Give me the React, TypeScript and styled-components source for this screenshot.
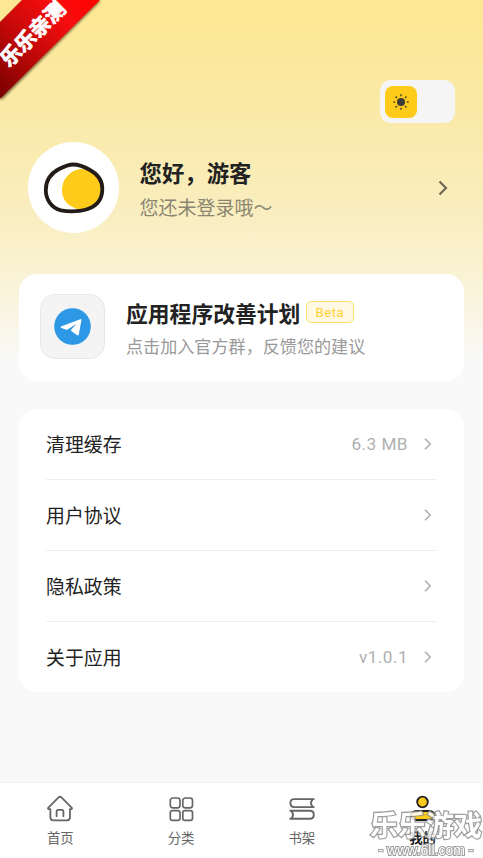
import React from 'react';
import styled, { createGlobalStyle } from 'styled-components';

const GlobalStyle = createGlobalStyle`
  * { box-sizing: border-box; }
  body { margin: 0; background: #f9f9f9; }
  h1, h2, p { margin: 0; }
`;

const Screen = styled.div`
  position: relative;
  display: flex;
  flex-direction: column;
  width: 483px;
  height: 858px;
  overflow: hidden;
  font-family: Roboto, 'Noto Sans CJK SC', sans-serif;
  color: #222;
  background: linear-gradient(180deg, #fde792 0, #faeaa9 120px, #f9edbc 200px, #faf2d2 270px, #f9f9f9 365px);
`;

const Ribbon = styled.div`
  position: absolute;
  left: 0;
  top: 0;
  width: 102px;
  height: 102px;
  overflow: hidden;
`;

const RibbonShape = styled.svg`
  display: block;
`;

const RibbonText = styled.span`
  position: absolute;
  left: -9px;
  top: 22px;
  width: 84px;
  line-height: 24px;
  text-align: center;
  white-space: nowrap;
  font-size: 20.5px;
  font-weight: 700;
  color: #fff;
  transform: rotate(-45deg);
  -webkit-text-stroke: 0.8px #fff;
`;

const TopBar = styled.header`
  display: flex;
  justify-content: flex-end;
  padding: 80px 28px 0 0;
`;

const ThemeSwitch = styled.button`
  display: flex;
  align-items: center;
  width: 75px;
  height: 43px;
  padding: 0 5px;
  border: 0;
  border-radius: 11px;
  background: #f5f5f5;
`;

const Knob = styled.span`
  display: grid;
  place-items: center;
  width: 32px;
  height: 32px;
  border-radius: 8px;
  background: #ffcb1a;
`;

const Profile = styled.section`
  display: flex;
  align-items: center;
  height: 92px;
  margin-top: 18.5px;
  padding: 0 33px 0 28px;
`;

const Avatar = styled.div`
  width: 91px;
  height: 91px;
  border-radius: 50%;
  background: #fff;
  svg { display: block; }
`;

const Greeting = styled.div`
  flex: 1;
  padding: 7px 0 0 20.5px;
`;

const Hello = styled.h1`
  font-size: 22.4px;
  line-height: 34px;
  font-weight: 700;
`;

const LoginHint = styled.p`
  margin-top: 1px;
  font-size: 19px;
  line-height: 34px;
  color: #8a8571;
`;

const Card = styled.section`
  margin: 0 19px;
  border-radius: 18px;
  background: #fff;
`;

const PlanCard = styled(Card)`
  display: flex;
  align-items: center;
  height: 107.5px;
  margin-top: 40px;
  padding-left: 21px;
`;

const AppTile = styled.div`
  display: grid;
  place-items: center;
  width: 65px;
  height: 65px;
  margin-bottom: 1px;
  border: 1.5px solid #e8e8e8;
  border-radius: 15px;
  background: #f4f4f4;
`;

const PlanText = styled.div`
  padding: 2px 0 0 21px;
`;

const PlanTitle = styled.h2`
  display: flex;
  align-items: center;
  height: 34px;
  font-size: 21.8px;
  font-weight: 700;
  white-space: nowrap;
`;

const Beta = styled.span`
  width: 48px;
  height: 22px;
  margin: -1px 0 0 5.4px;
  border: 1.5px solid #ffdf70;
  border-radius: 5px;
  background: #fff9e3;
  color: #ffd032;
  font-size: 13.2px;
  font-weight: 400;
  line-height: 21px;
  letter-spacing: 0.5px;
  text-align: center;
`;

const PlanHint = styled.p`
  margin-top: 3px;
  font-size: 17.1px;
  line-height: 28px;
  color: #999;
`;

const Settings = styled(Card)`
  height: 283px;
  margin-top: 28px;
  padding: 0 27px;
`;

const Row = styled.div`
  display: flex;
  align-items: center;
  height: 71px;
  font-size: 18.9px;
  border-bottom: 1.5px solid #eee;
  &:last-child { height: 70px; border-bottom: 0; }
`;

const RowLabel = styled.span`
  flex: 1;
  padding-bottom: 0.5px;
`;

const RowValue = styled.span`
  margin-right: 15px;
  font-size: 17.2px;
  letter-spacing: 0.45px;
  color: #b0b0b0;
`;

const RowArrow = styled.svg`
  margin-right: 4px;
`;

const TabBar = styled.nav`
  display: grid;
  grid-template-columns: repeat(4, 1fr);
  height: 76px;
  margin-top: auto;
  border-top: 1.5px solid #f0f0f0;
  background: #fff;
`;

const Tab = styled.div<{ $active?: boolean }>`
  display: flex;
  flex-direction: column;
  align-items: center;
  padding-top: 12px;
  font-size: 13.4px;
  line-height: 20px;
  color: ${p => (p.$active ? '#222' : '#666')};
  font-weight: ${p => (p.$active ? 700 : 400)};
  svg { margin-bottom: 6px; flex: none; }
`;

const Watermark = styled.div`
  position: absolute;
  right: 0;
  bottom: 1px;
  width: 114px;
  text-align: center;
  white-space: nowrap;
  color: #fff;
  opacity: 0.85;
  paint-order: stroke fill;
`;

const WatermarkName = styled.div`
  font-size: 28px;
  line-height: 33px;
  font-weight: 700;
  -webkit-text-stroke: 2.4px #8c8c8c;
`;

const WatermarkSite = styled.div`
  font-family: 'Liberation Sans', sans-serif;
  font-size: 14px;
  line-height: 14px;
  -webkit-text-stroke: 2px #8c8c8c;
`;

const Chevron = () => (
  <RowArrow width="10" height="14" viewBox="0 0 10 14" fill="none" stroke="#b0b0b0" strokeWidth="1.6">
    <path d="M2 1.8 7.2 7 2 12.2" />
  </RowArrow>
);

const SunIcon = () => (
  <svg width="18" height="18" viewBox="-9 -9 18 18" stroke="#403a2c" strokeWidth="1.4">
    <circle r="4" fill="#3b3a36" stroke="none" />
    {[0, 45, 90, 135, 180, 225, 270, 315].map(a => (
      <path key={a} d="M0-5.8V-7.7" transform={`rotate(${a})`} />
    ))}
  </svg>
);

const EggIcon = () => (
  <svg width="91" height="91" viewBox="0 0 91 91" fill="none">
    <path d="M75 46C75 60 66 67 53 68C44 66 34 61 34 48C34 36 44 27 54 27C67 29 75 36 75 46Z" fill="#ffcb1a" />
    <path d="M45 22.5C51 22.5 56 24.5 62 28C69.5 32 74.3 39 74.3 47C74.3 56 70 63 61 66.5C54 69.5 42 70 33 68.3C23 66 17.8 57 17.8 48C17.8 38 23.5 31 31 27C36 24.5 40 22.5 45 22.5Z" stroke="#231b18" strokeWidth="3.8" />
  </svg>
);

const TelegramIcon = () => (
  <svg width="37" height="37" viewBox="0 0 37 37">
    <circle cx="18.5" cy="18.5" r="18.3" fill="#2d98e5" />
    <path d="M7 18.5 26.3 11.2Q27.6 10.8 27.4 12.2L24.8 26.5Q24.4 28.3 22.8 27.1L17.3 23Q16.4 22.3 17.3 21.5L22.7 15.8 13.6 21.4Q12.7 22 11.7 21.6L7.2 20Q6 19.3 7 18.5Z" fill="#fff" />
  </svg>
);

const HomeIcon = () => (
  <svg width="28" height="28" viewBox="0 0 28 28" fill="none" stroke="#666" strokeWidth="1.8" strokeLinejoin="round" strokeLinecap="round">
    <path d="M4.4 14.2H2.7Q1.4 13.7 2.4 12.7L12.8 2.2Q14 1.3 15.2 2.2L25.6 12.7Q26.6 13.7 25.3 14.2H23.9V22.6Q23.9 25.3 21 25.3H7.2Q4.4 25.3 4.4 22.6ZM10.6 21.2V16.5Q10.6 14.8 12.2 14.8H15.8Q17.4 14.8 17.4 16.5V21.2" />
  </svg>
);

const GridIcon = () => (
  <svg width="28" height="28" viewBox="0 0 28 28" fill="none" stroke="#666" strokeWidth="1.7">
    <rect x="3.3" y="3" width="9.7" height="9.8" rx="2.5" />
    <rect x="15.8" y="3" width="9.7" height="9.8" rx="2.5" />
    <rect x="3.3" y="15.6" width="9.7" height="9.8" rx="2.2" />
    <rect x="15.8" y="15.6" width="9.7" height="9.8" rx="2.2" />
  </svg>
);

const BooksIcon = () => (
  <svg width="28" height="28" viewBox="0 0 28 28" fill="none" stroke="#666" strokeWidth="1.9">
    <path d="M26.5 4.1H6Q2.4 4.1 2.4 8.1T6 12.1H26.5M24.8 4.1Q21.2 8.1 24.8 12.1M1.5 15.8H22Q25.8 15.8 25.8 19.8T22 23.8H1.5M3.2 15.8Q6.8 19.8 3.2 23.8" />
  </svg>
);

const UserIcon = () => (
  <svg width="28" height="28" viewBox="0 0 28 28" fill="#ffcb1a" stroke="#222" strokeWidth="1.8">
    <circle cx="13.5" cy="7" r="5.3" />
    <path d="M8 16H20Q25.5 16.5 25.5 20.5T20 25H7.5Q2 24.5 2 20.5T8 16Z" />
  </svg>
);

const rows = [
  { label: '清理缓存', value: '6.3 MB' },
  { label: '用户协议' },
  { label: '隐私政策' },
  { label: '关于应用', value: 'v1.0.1' },
];

const tabs = [
  { label: '首页', Icon: HomeIcon },
  { label: '分类', Icon: GridIcon },
  { label: '书架', Icon: BooksIcon },
  { label: '我的', Icon: UserIcon, active: true },
];

export default function App() {
  return (
    <Screen>
      <GlobalStyle />
      <TopBar>
        <ThemeSwitch aria-label="主题">
          <Knob><SunIcon /></Knob>
        </ThemeSwitch>
      </TopBar>
      <Profile>
        <Avatar><EggIcon /></Avatar>
        <Greeting>
          <Hello>您好，游客</Hello>
          <LoginHint>您还未登录哦～</LoginHint>
        </Greeting>
        <svg width="14" height="18" viewBox="0 0 14 18" fill="none" stroke="#6b6653" strokeWidth="2.1">
          <path d="M3.5 2.5 10 9 3.5 15.5" />
        </svg>
      </Profile>
      <PlanCard>
        <AppTile><TelegramIcon /></AppTile>
        <PlanText>
          <PlanTitle>应用程序改善计划<Beta>Beta</Beta></PlanTitle>
          <PlanHint>点击加入官方群，反馈您的建议</PlanHint>
        </PlanText>
      </PlanCard>
      <Settings>
        {rows.map(row => (
          <Row key={row.label}>
            <RowLabel>{row.label}</RowLabel>
            {row.value && <RowValue>{row.value}</RowValue>}
            <Chevron />
          </Row>
        ))}
      </Settings>
      <TabBar>
        {tabs.map(({ label, Icon, active }) => (
          <Tab key={label} $active={active}>
            <Icon />
            {label}
          </Tab>
        ))}
      </TabBar>
      <Ribbon>
        <RibbonShape width="102" height="102" viewBox="0 0 102 102">
          <defs>
            <linearGradient id="ribbon" x1="0" y1="1" x2="1" y2="0">
              <stop offset="0" stopColor="#780000" />
              <stop offset="0.5" stopColor="#d30a0a" />
              <stop offset="0.75" stopColor="#f80d0d" />
              <stop offset="1" stopColor="#ff0000" />
            </linearGradient>
            <filter id="soft"><feGaussianBlur stdDeviation="1" /></filter>
          </defs>
          <path d="M22 1H101L1 101V23Z" fill="#6b5a30" opacity="0.75" filter="url(#soft)" />
          <path d="M22 0H100L0 99V22Z" fill="url(#ribbon)" />
        </RibbonShape>
        <RibbonText>乐乐亲测</RibbonText>
      </Ribbon>
      <Watermark>
        <WatermarkName>乐乐游戏</WatermarkName>
        <WatermarkSite>- www.6ll.com -</WatermarkSite>
      </Watermark>
    </Screen>
  );
}
